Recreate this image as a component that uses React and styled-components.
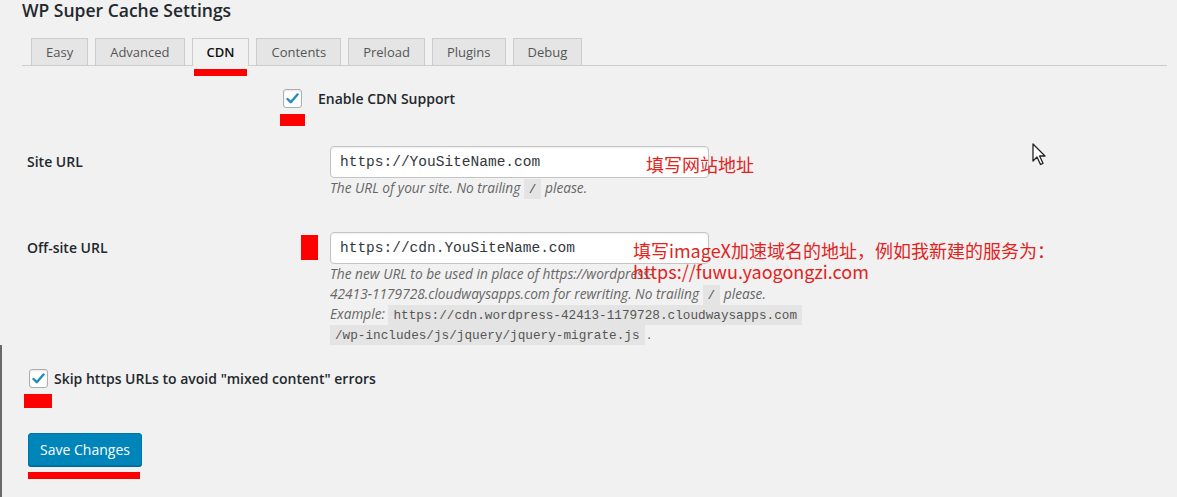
import styled, { createGlobalStyle } from 'styled-components';

const GlobalStyle = createGlobalStyle`
  html, body {
    margin: 0;
    background: #f1f1f1;
  }
  body {
    font-family: 'Open Sans', 'Noto Sans', sans-serif;
    color: #23282d;
  }
`;

const tabs = ['Easy', 'Advanced', 'CDN', 'Contents', 'Preload', 'Plugins', 'Debug'];

const CheckIcon = () => (
  <svg width='13' height='11' viewBox='0 0 13 11'>
    <path
      d='M1.5 6 L4.8 9.2 L11.5 1.5'
      fill='none'
      stroke='#1e8cbe'
      strokeWidth='2.4'
      strokeLinecap='round'
      strokeLinejoin='round'
    />
  </svg>
);

const Cursor = () => (
  <svg width='16' height='24' viewBox='0 0 16 24'>
    <path
      d='M1 1 L1 18 L5 14 L8.5 21.5 L11 20.3 L7.6 13 L13 13 Z'
      fill='#fff'
      stroke='#222'
      strokeWidth='1.3'
      strokeLinejoin='round'
    />
  </svg>
);

const App = () => {
  return (
    <Page>
      <GlobalStyle />
      <Title>WP Super Cache Settings</Title>
      <TabNav>
        {tabs.map((t) => (
          <Tab key={t} $active={t === 'CDN'}>
            {t}
            {t === 'CDN' && <TabMark />}
          </Tab>
        ))}
      </TabNav>

      <EnableRow>
        <CheckCell>
          <Checkbox>
            <CheckIcon />
          </Checkbox>
          <Marker $w={25} $h={12} />
        </CheckCell>
        <CheckLabel>Enable CDN Support</CheckLabel>
      </EnableRow>

      <FormTable>
        <LabelCell>
          <FieldLabel>Site URL</FieldLabel>
        </LabelCell>
        <FieldCell>
          <Input>https://YouSiteName.com</Input>
          <Description>
            The URL of your site. No trailing <Code>/</Code> please.
          </Description>
          <Note $left={316}>填写网站地址</Note>
        </FieldCell>

        <LabelCell>
          <FieldLabel>Off-site URL</FieldLabel>
          <Marker $w={17} $h={25} />
        </LabelCell>
        <FieldCell>
          <Input>https://cdn.YouSiteName.com</Input>
          <Description>
            The new URL to be used in place of https://wordpress-
            <br />
            42413-1179728.cloudwaysapps.com for rewriting. No trailing{' '}
            <Code>/</Code> please.
            <br />
            Example: <Code>https://cdn.wordpress-42413-1179728.cloudwaysapps.com</Code>
            <br />
            <Code>/wp-includes/js/jquery/jquery-migrate.js</Code> .
          </Description>
          <Note $left={303}>
            填写imageX加速域名的地址，例如我新建的服务为：
            <br />
            https://fuwu.yaogongzi.com
          </Note>
        </FieldCell>
      </FormTable>

      <SkipRow>
        <CheckCell>
          <Checkbox>
            <CheckIcon />
          </Checkbox>
          <Marker $w={28} $h={14} />
        </CheckCell>
        <CheckLabel>Skip https URLs to avoid "mixed content" errors</CheckLabel>
      </SkipRow>

      <SubmitBlock>
        <Button>Save Changes</Button>
        <Marker $w={112} $h={7} />
      </SubmitBlock>

      <Pointer>
        <Cursor />
      </Pointer>
    </Page>
  );
};

const Page = styled.div`
  position: relative;
  box-sizing: border-box;
  min-height: 497px;
  padding: 0 10px 0 20px;
  border-left: 2px solid;
  border-image: linear-gradient(to bottom, transparent 345px, #6a6a6a 345px) 1;
`;

const Title = styled.h1`
  margin: 0;
  font-size: 17.5px;
  line-height: 20px;
  font-weight: 600;
  color: #23282d;
`;

const TabNav = styled.div`
  display: flex;
  align-items: flex-end;
  margin-top: 18px;
  padding-left: 9px;
  border-bottom: 1px solid #ccc;
  height: 27px;
`;

const Tab = styled.div`
  position: relative;
  box-sizing: border-box;
  height: ${({ $active }) => ($active ? '28px' : '27px')};
  margin-bottom: ${({ $active }) => ($active ? '-1px' : '0')};
  margin-right: 7px;
  padding: 0 14px;
  border: 1px solid #ccc;
  border-bottom: none;
  background: ${({ $active }) => ($active ? '#f1f1f1' : '#e5e5e5')};
  color: ${({ $active }) => ($active ? '#111' : '#555')};
  font-size: 13px;
  font-weight: ${({ $active }) => ($active ? 600 : 400)};
  line-height: 27px;
`;

const TabMark = styled.span`
  position: absolute;
  left: 1px;
  right: 1px;
  top: 30px;
  height: 7px;
  background: #ff0000;
`;

const Marker = styled.div`
  width: ${({ $w }) => $w}px;
  height: ${({ $h }) => $h}px;
  background: #ff0000;
  flex-shrink: 0;
`;

const EnableRow = styled.div`
  display: flex;
  align-items: flex-start;
  gap: 13px;
  margin: 23px 0 0 258px;
`;

const CheckCell = styled.div`
  display: flex;
  flex-direction: column;
  align-items: center;
  gap: 6px;
`;

const Checkbox = styled.span`
  box-sizing: border-box;
  width: 19px;
  height: 19px;
  display: flex;
  align-items: center;
  justify-content: center;
  background: #fff;
  border: 1px solid #a9aeb3;
  border-radius: 3px;
  box-shadow: inset 0 1px 2px rgba(0, 0, 0, 0.1);
`;

const CheckLabel = styled.span`
  font-size: 14px;
  font-weight: 600;
  line-height: 20px;
  color: #23282d;
`;

const FormTable = styled.div`
  display: grid;
  grid-template-columns: 308px 1fr;
  row-gap: 34px;
  margin-top: 20px;
`;

const LabelCell = styled.div`
  display: flex;
  align-items: flex-start;
  justify-content: space-between;
  padding: 0 12px 0 5px;
  height: 32px;

  & > ${Marker} {
    margin-top: 3px;
  }
`;

const FieldLabel = styled.span`
  font-size: 14px;
  font-weight: 600;
  line-height: 32px;
  color: #23282d;
`;

const FieldCell = styled.div`
  position: relative;
`;

const Input = styled.div`
  box-sizing: border-box;
  width: 379px;
  height: 32px;
  padding: 0 9px;
  background: #fff;
  border: 1px solid #c4c4c4;
  border-radius: 4px;
  box-shadow: inset 0 1px 2px rgba(0, 0, 0, 0.07);
  font-family: 'Liberation Mono', 'DejaVu Sans Mono', monospace;
  font-size: 14.5px;
  line-height: 31px;
  color: #32373c;
`;

const Description = styled.div`
  font-size: 13.7px;
  font-style: italic;
  line-height: 20px;
  color: #666;
  white-space: nowrap;
`;

const Code = styled.code`
  font-family: 'Liberation Mono', 'DejaVu Sans Mono', monospace;
  font-style: normal;
  font-size: 12.7px;
  line-height: 1;
  background: #e4e4e4;
  padding: 3px 5px 2px;
  color: #555;
`;

const Note = styled.div`
  position: absolute;
  left: ${({ $left }) => $left}px;
  top: 8px;
  font-family: 'Noto Sans CJK SC', sans-serif;
  font-size: 18px;
  line-height: 21px;
  color: #e2231d;
  white-space: nowrap;
`;

const SkipRow = styled.div`
  display: flex;
  align-items: flex-start;
  gap: 2px;
  margin: 25px 0 0 2px;
`;

const SubmitBlock = styled.div`
  display: flex;
  flex-direction: column;
  gap: 6px;
  margin: 25px 0 0 6px;
`;

const Button = styled.button`
  box-sizing: border-box;
  width: 114px;
  height: 33px;
  padding: 0 10px;
  background: #0085ba;
  border: 1px solid #0073aa;
  border-radius: 3px;
  box-shadow: 0 1px 0 #006799;
  color: #fff;
  font-family: 'Open Sans', 'Noto Sans', sans-serif;
  font-size: 14px;
  cursor: pointer;
`;

const Pointer = styled.div`
  position: absolute;
  left: 1030px;
  top: 143px;
`;

export default App;
